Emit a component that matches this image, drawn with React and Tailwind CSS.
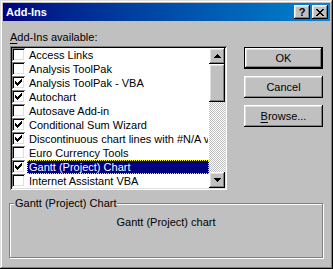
const RAISED =
  "shadow-[inset_-1px_-1px_#000,inset_1px_1px_#fff,inset_-2px_-2px_#808080,inset_2px_2px_#dfdfdf]";
const SUNKEN =
  "shadow-[inset_1px_1px_#808080,inset_-1px_-1px_#fff,inset_2px_2px_#000,inset_-2px_-2px_#dfdfdf]";

const items = [
  ["Access Links", false],
  ["Analysis ToolPak", false],
  ["Analysis ToolPak - VBA", true],
  ["Autochart", true],
  ["Autosave Add-in", false],
  ["Conditional Sum Wizard", true],
  ["Discontinuous chart lines with #N/A values", true],
  ["Euro Currency Tools", false],
  ["Gantt (Project) Chart", true, true],
  ["Internet Assistant VBA", false],
];

function Check() {
  const px = [
    [6, 0], [5, 1], [6, 1], [0, 2], [4, 2], [5, 2], [6, 2],
    [0, 3], [1, 3], [3, 3], [4, 3], [5, 3],
    [0, 4], [1, 4], [2, 4], [3, 4], [4, 4],
    [1, 5], [2, 5], [3, 5], [2, 6],
  ];
  return (
    <svg width="7" height="7" viewBox="0 0 7 7" shapeRendering="crispEdges">
      {px.map(([x, y]) => (
        <rect key={x + "-" + y} x={x} y={y} width="1" height="1" fill="#000" />
      ))}
    </svg>
  );
}

function CheckBox({ checked }) {
  return (
    <div className={"w-[13px] h-[13px] shrink-0 bg-white flex items-center justify-center " + SUNKEN}>
      {checked ? <Check /> : null}
    </div>
  );
}

function Arrow({ up }) {
  return (
    <svg width="7" height="4" viewBox="0 0 7 4" shapeRendering="crispEdges">
      {up ? (
        <path d="M3 0h1v1h1v1h1v1h1v1H0V3h1V2h1V1h1z" fill="#000" />
      ) : (
        <path d="M0 0h7v1H6v1H5v1H4v1H3V3H2V2H1V1H0z" fill="#000" />
      )}
    </svg>
  );
}

function CloseGlyph() {
  const rows = ["xx....xx", ".xx..xx.", "..xxxx..", "...xx...", "..xxxx..", ".xx..xx.", "xx....xx"];
  const px = [];
  rows.forEach((r, y) =>
    r.split("").forEach((c, x) => {
      if (c === "x") px.push([x, y]);
    })
  );
  return (
    <svg width="8" height="7" viewBox="0 0 8 7" shapeRendering="crispEdges">
      {px.map(([x, y]) => (
        <rect key={x + "-" + y} x={x} y={y} width="1" height="1" fill="#000" />
      ))}
    </svg>
  );
}

function Button({ children, isDefault }) {
  if (isDefault) {
    return (
      <div className="h-[22px] border border-black flex">
        <div className={"flex-1 flex items-center justify-center " + RAISED}>{children}</div>
      </div>
    );
  }
  return <div className={"h-[22px] flex items-center justify-center " + RAISED}>{children}</div>;
}

export default function App() {
  return (
    <div
      className={
        "w-[333px] h-[269px] bg-[#c0c0c0] p-[3px] flex flex-col font-['Liberation_Sans',Arial,sans-serif] text-[11px] leading-[13px] text-black overflow-hidden shadow-[inset_-1px_-1px_#000,inset_1px_1px_#dfdfdf,inset_-2px_-2px_#808080,inset_2px_2px_#fff]"
      }
    >
      <div className="h-[18px] shrink-0 flex items-center bg-linear-to-r from-[#000080] to-[#1084d0] pl-[3px] pr-[2px]">
        <span className="flex-1 font-bold text-white">Add-Ins</span>
        <div className={"w-[16px] h-[14px] bg-[#c0c0c0] flex items-center justify-center font-bold text-[11px] leading-[11px] pt-[1px] " + RAISED}>
          ?
        </div>
        <div className={"ml-[2px] w-[16px] h-[14px] bg-[#c0c0c0] flex items-center justify-center " + RAISED}>
          <CloseGlyph />
        </div>
      </div>

      <div className="flex mt-[10px] pl-[7px]">
        <div className="w-[217px] flex flex-col">
          <div className="h-[15px]">
            <span className="underline underline-offset-[2px]">A</span>dd-Ins available:
          </div>
          <div className={"h-[144px] p-[2px] bg-white flex " + SUNKEN}>
            <div className="flex-1 flex flex-col overflow-hidden whitespace-nowrap">
              {items.map(([label, checked, selected]) => (
                <div key={label} className="h-[14px] flex items-start">
                  <CheckBox checked={checked} />
                  <div
                    className={
                      "ml-[2px] flex-1 h-[14px] pl-[1px] leading-[12px] border overflow-hidden " +
                      (selected
                        ? "bg-[#000080] text-white border-dotted border-[#ffff00]"
                        : "border-transparent")
                    }
                  >
                    {label}
                  </div>
                </div>
              ))}
            </div>
            <div className="w-[16px] flex flex-col bg-[repeating-conic-gradient(#c0c0c0_0%_25%,#ffffff_0%_50%)] bg-[length:2px_2px]">
              <div className={"h-[16px] bg-[#c0c0c0] flex items-center justify-center " + RAISED}>
                <Arrow up />
              </div>
              <div className={"h-[38px] bg-[#c0c0c0] " + RAISED}></div>
              <div className="flex-1"></div>
              <div className={"h-[16px] bg-[#c0c0c0] flex items-center justify-center " + RAISED}>
                <Arrow />
              </div>
            </div>
          </div>
        </div>

        <div className="ml-[17px] w-[79px] flex flex-col pt-[16px] gap-[7px]">
          <Button isDefault>OK</Button>
          <Button>Cancel</Button>
          <Button>
            <span>
              <span className="underline underline-offset-[2px]">B</span>rowse...
            </span>
          </Button>
        </div>
      </div>

      <fieldset className="mt-[7px] ml-[6px] w-[314px] h-[61px] border border-[#808080] shadow-[inset_1px_1px_#fff,1px_1px_#fff]">
        <legend className="ml-[4px] px-[1px] bg-[#c0c0c0]">Gantt (Project) Chart</legend>
        <div className="mt-[6px] text-center">Gantt (Project) chart</div>
      </fieldset>
    </div>
  );
}
